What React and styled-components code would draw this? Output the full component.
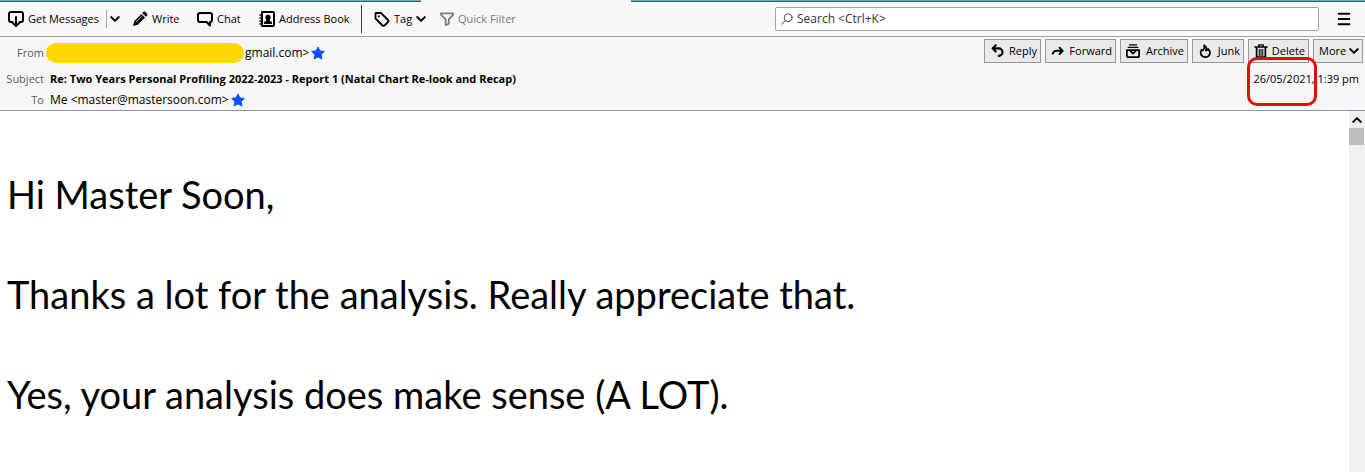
import styled, { createGlobalStyle } from 'styled-components';

const GlobalStyle = createGlobalStyle`
  * {
    box-sizing: border-box;
  }

  html, body, #root {
    height: 100%;
  }

  body {
    margin: 0;
    background: #fff;
    color: #000;
    font-family: "Open Sans", "Noto Sans", sans-serif;
    font-size: 12px;
    line-height: 16px;
  }
`;

const Window = styled.div`
  display: flex;
  flex-direction: column;
  height: 100%;
`;

const TabStrip = styled.div`
  display: grid;
  grid-template-columns: 421fr 210fr 734fr;
  flex: none;
  height: 2px;
  background: #f5f6f8;
`;

const TabEdge = styled.span`
  background: #6fa9bd;
  border-bottom: 1px solid #2c6078;
`;

const Toolbar = styled.nav`
  display: flex;
  align-items: center;
  flex: none;
  height: 35px;
  padding: 0 14px 0 8px;
  background: #f7f7f9;
  border-bottom: 1px solid #a2a3a6;
`;

const ToolButton = styled.button`
  display: flex;
  align-items: center;
  flex: none;
  gap: 4px;
  width: ${props => props.$width}px;
  height: 28px;
  padding: 0;
  border: 0;
  background: none;
  color: ${props => (props.$muted ? '#7b7b80' : '#000')};
  font: inherit;
  font-size: 11px;
  white-space: nowrap;
`;

const Divider = styled.span`
  flex: none;
  width: 1px;
  height: ${props => (props.$tall ? 28 : 18)}px;
  margin-right: ${props => (props.$tall ? 12 : 3)}px;
  background: ${props => (props.$tall ? '#3c3c40' : '#a5a5a8')};
`;

const SearchBox = styled.label`
  display: flex;
  align-items: center;
  flex: 1;
  gap: 4px;
  height: 24px;
  margin: 0 18px 0 auto;
  max-width: 544px;
  padding: 0 5px;
  background: #fff;
  border: 1px solid #a3a3a8;
  border-radius: 2px;
`;

const SearchInput = styled.input`
  flex: 1;
  min-width: 0;
  padding: 0;
  border: 0;
  outline: 0;
  background: none;
  font: inherit;

  &::placeholder {
    color: #333;
    opacity: 1;
  }
`;

const MessageHeader = styled.header`
  flex: none;
  padding-right: 2px;
  background: #f6f6f6;
  border-bottom: 1px solid #8794ab;
`;

const HeaderRow = styled.div`
  display: flex;
  align-items: center;
  height: ${props => (props.$tall ? 31 : 21)}px;
`;

const Label = styled.span`
  flex: none;
  width: 44px;
  margin-right: ${props => (props.$tight ? 2 : 6)}px;
  color: #5c5c60;
  font-size: 11px;
  text-align: right;
`;

const Subject = styled.strong`
  font-size: 11px;
  font-weight: 700;
`;

const Redacted = styled.span`
  width: 198px;
  height: 20px;
  margin-right: 1px;
  border-radius: 10px;
  background: #ffd800;
`;

const Star = styled.svg`
  width: 14px;
  height: 14px;
  margin-left: 2px;
  fill: #0a50ff;
  stroke: #0a50ff;
  stroke-linejoin: round;
`;

const Actions = styled.div`
  display: flex;
  align-self: flex-start;
  gap: 4px;
  margin-left: auto;
  padding-top: 2px;
`;

const ActionButton = styled.button`
  display: flex;
  align-items: center;
  justify-content: space-between;
  width: ${props => props.$width}px;
  height: 24px;
  padding: 0 3px 0 5px;
  border: 1px solid #98989b;
  background: #e9e9e9;
  color: #000;
  font: inherit;
  font-size: 11px;
  white-space: nowrap;
`;

const Received = styled.time`
  margin-left: auto;
  padding-right: 4px;
  font-size: 11px;
`;

const Marked = styled.span`
  position: relative;

  &::after {
    content: '';
    position: absolute;
    inset: -14px -5px -20px -6px;
    border: 3px solid #e60c0c;
    border-radius: 10px;
  }
`;

const Reader = styled.main`
  display: flex;
  flex: 1;
  min-height: 0;
`;

const Body = styled.article`
  flex: 1;
  min-width: 0;
  padding: 58px 7px 0;
  overflow: hidden;
  font-family: Lato, "Noto Sans", sans-serif;
  font-size: 38px;
  line-height: 50px;
`;

const Paragraph = styled.p`
  margin: 0 0 50px;
`;

const Scrollbar = styled.div`
  flex: none;
  width: 16px;
  background: #f0f0f0;
`;

const ScrollUp = styled.button`
  display: flex;
  align-items: center;
  justify-content: center;
  width: 100%;
  height: 17px;
  padding: 0;
  border: 0;
  background: none;
`;

const ScrollThumb = styled.div`
  width: 15px;
  height: 17px;
  background: #bdbdbd;
`;

const Icon = ({ size = 16, children, ...rest }) => (
  <svg
    width={size}
    height={size}
    viewBox="0 0 16 16"
    fill="none"
    stroke="currentColor"
    strokeWidth="2"
    strokeLinecap="round"
    strokeLinejoin="round"
    aria-hidden="true"
    {...rest}
  >
    {children}
  </svg>
);

const InboxIcon = () => (
  <Icon>
    <path d="M4.500 11H3a2 2 0 0 1-2-2V3a2 2 0 0 1 2-2h10a2 2 0 0 1 2 2v6a2 2 0 0 1-2 2h-1.500M8 6v8M4 11.300 8 15l4-3.700" />
  </Icon>
);

const PenIcon = () => (
  <Icon fill="currentColor" stroke="none">
    <path d="m1 15 1.200-4.800 7.200-7.200 3.600 3.600-7.200 7.200zM10.300 2.100l1-1c.7-.7 1.500-.7 2.200 0l1.400 1.400c.7.7.7 1.500 0 2.200l-1 1z" />
    <path d="m4 11 5.500-5.500" stroke="#f7f7f9" strokeWidth="0.8" />
  </Icon>
);

const ChatIcon = () => (
  <Icon>
    <path d="M3 2h10a2 2 0 0 1 2 2v5a2 2 0 0 1-2 2v3.500L9.500 11H3a2 2 0 0 1-2-2V4a2 2 0 0 1 2-2z" />
  </Icon>
);

const AddressBookIcon = () => (
  <Icon>
    <path d="M3 1h11a1 1 0 0 1 1 1v12a1 1 0 0 1-1 1H3z" />
    <path d="M1 4h2M1 7h2M1 10h2M1 13h2" strokeWidth="1.500" />
    <path d="M5 13v-2l2.500-1.500C6.500 8 6.300 6.800 6.500 5.500 6.800 3 11.200 3 11.500 5.500c.2 1.300 0 2.500-1 4L13 11v2z" fill="currentColor" stroke="none" />
  </Icon>
);

const TagIcon = () => (
  <Icon>
    <path d="M1.500 2.500v5l7 7c.6.6 1.400.6 2 0l3.500-3.500c.6-.6.6-1.400 0-2l-7-7h-5z" strokeWidth="1.800" />
    <circle cx="4.800" cy="5.300" r="1.100" fill="currentColor" stroke="none" />
  </Icon>
);

const FilterIcon = () => (
  <Icon size={14}>
    <path d="M1 1.500h14v1.500L10 8.500v5L6.500 15V8.500L1 3z" />
  </Icon>
);

const ChevronIcon = ({ up }) => (
  <Icon size={10}>
    <path d={up ? 'm2 11 6-6 6 6' : 'm2 5 6 6 6-6'} strokeWidth="3.200" />
  </Icon>
);

const SearchIcon = () => (
  <Icon size={12} stroke="#444" strokeWidth="1.300">
    <circle cx="9.500" cy="6.200" r="5.200" />
    <path d="M5.800 10 1 15" />
  </Icon>
);

const MenuIcon = () => (
  <Icon size={14} strokeLinecap="butt">
    <path d="M1 2h14M1 8h14M1 14h14" strokeWidth="2.300" />
  </Icon>
);

const ReplyIcon = () => (
  <Icon size={14}>
    <path d="M6.500 1.500 3 5l3.500 3.500M3.500 5H10a4.300 4.300 0 0 1 0 8.600" strokeWidth="2.400" />
  </Icon>
);

const ForwardIcon = () => (
  <Icon size={14}>
    <path d="M2 11c1-2.500 2.500-3.200 4.500-3.200H13M9.800 4.200l3.600 3.600-3.600 3.600" strokeWidth="2.200" />
  </Icon>
);

const ArchiveIcon = () => (
  <Icon size={14}>
    <path d="M4 1h8M2.500 3.800h11" strokeWidth="1.500" />
    <path d="M1 7h14v6a2 2 0 0 1-2 2H3a2 2 0 0 1-2-2zM5 8l3 3 3-3" />
  </Icon>
);

const JunkIcon = () => (
  <Icon size={14}>
    <path d="M7 1.500c2.500 1.500 3 3.500 2 6 1.200 0 2-.7 2.500-1.800C15.500 9.500 13.500 15 8.500 15 3.500 15 1.500 10.500 4 6.500c.6.700 1.200 1 2 .8C7.200 5.500 7.500 3.500 7 1.500z" />
  </Icon>
);

const TrashIcon = () => (
  <Icon size={14}>
    <path d="M1 3.500h14M5.500 3V1h5v2" strokeWidth="1.700" />
    <path d="M3 4v11h10V4" />
    <path d="M6 6v7M8 6v7M10 6v7" strokeWidth="1.200" />
  </Icon>
);

const StarIcon = () => (
  <Star viewBox="0 0 16 16" aria-hidden="true">
    <path d="m8 1 2.200 4.500 5.100.7-3.700 3.600.9 5.100L8 12.500l-4.500 2.400.9-5.100L.7 6.200l5.100-.7z" />
  </Star>
);

const App = () => {
  return (
    <Window>
      <GlobalStyle />
      <TabStrip>
        <TabEdge />
        <span />
        <TabEdge />
      </TabStrip>
      <Toolbar>
        <ToolButton $width={98}><InboxIcon />Get Messages</ToolButton>
        <Divider />
        <ToolButton $width={22} aria-label="Get messages options"><ChevronIcon /></ToolButton>
        <ToolButton $width={65}><PenIcon />Write</ToolButton>
        <ToolButton $width={62}><ChatIcon />Chat</ToolButton>
        <ToolButton $width={102}><AddressBookIcon />Address Book</ToolButton>
        <Divider $tall />
        <ToolButton $width={66}><TagIcon />Tag<ChevronIcon /></ToolButton>
        <ToolButton $width={80} $muted><FilterIcon />Quick Filter</ToolButton>
        <SearchBox>
          <SearchIcon />
          <SearchInput type="search" aria-label="Search" placeholder="Search <Ctrl+K>" />
        </SearchBox>
        <ToolButton $width={14} aria-label="Menu"><MenuIcon /></ToolButton>
      </Toolbar>
      <MessageHeader>
        <HeaderRow $tall>
          <Label $tight>From</Label>
          <Redacted />
          <span>gmail.com&gt;</span>
          <StarIcon />
          <Actions>
            <ActionButton $width={57}><ReplyIcon />Reply</ActionButton>
            <ActionButton $width={71}><ForwardIcon />Forward</ActionButton>
            <ActionButton $width={68}><ArchiveIcon />Archive</ActionButton>
            <ActionButton $width={52}><JunkIcon />Junk</ActionButton>
            <ActionButton $width={61}><TrashIcon />Delete</ActionButton>
            <ActionButton $width={50}>More<ChevronIcon /></ActionButton>
          </Actions>
        </HeaderRow>
        <HeaderRow>
          <Label>Subject</Label>
          <Subject>Re: Two Years Personal Profiling 2022-2023 - Report 1 (Natal Chart Re-look and Recap)</Subject>
          <Received dateTime="2021-05-26T13:39"><Marked>26/05/2021</Marked>, 1:39 pm</Received>
        </HeaderRow>
        <HeaderRow>
          <Label>To</Label>
          <span>Me &lt;master@mastersoon.com&gt;</span>
          <StarIcon />
        </HeaderRow>
      </MessageHeader>
      <Reader>
        <Body>
          <Paragraph>Hi Master Soon,</Paragraph>
          <Paragraph>Thanks a lot for the analysis. Really appreciate that.</Paragraph>
          <Paragraph>Yes, your analysis does make sense (A LOT).</Paragraph>
        </Body>
        <Scrollbar>
          <ScrollUp aria-label="Scroll up"><ChevronIcon up /></ScrollUp>
          <ScrollThumb />
        </Scrollbar>
      </Reader>
    </Window>
  );
};

export default App;
